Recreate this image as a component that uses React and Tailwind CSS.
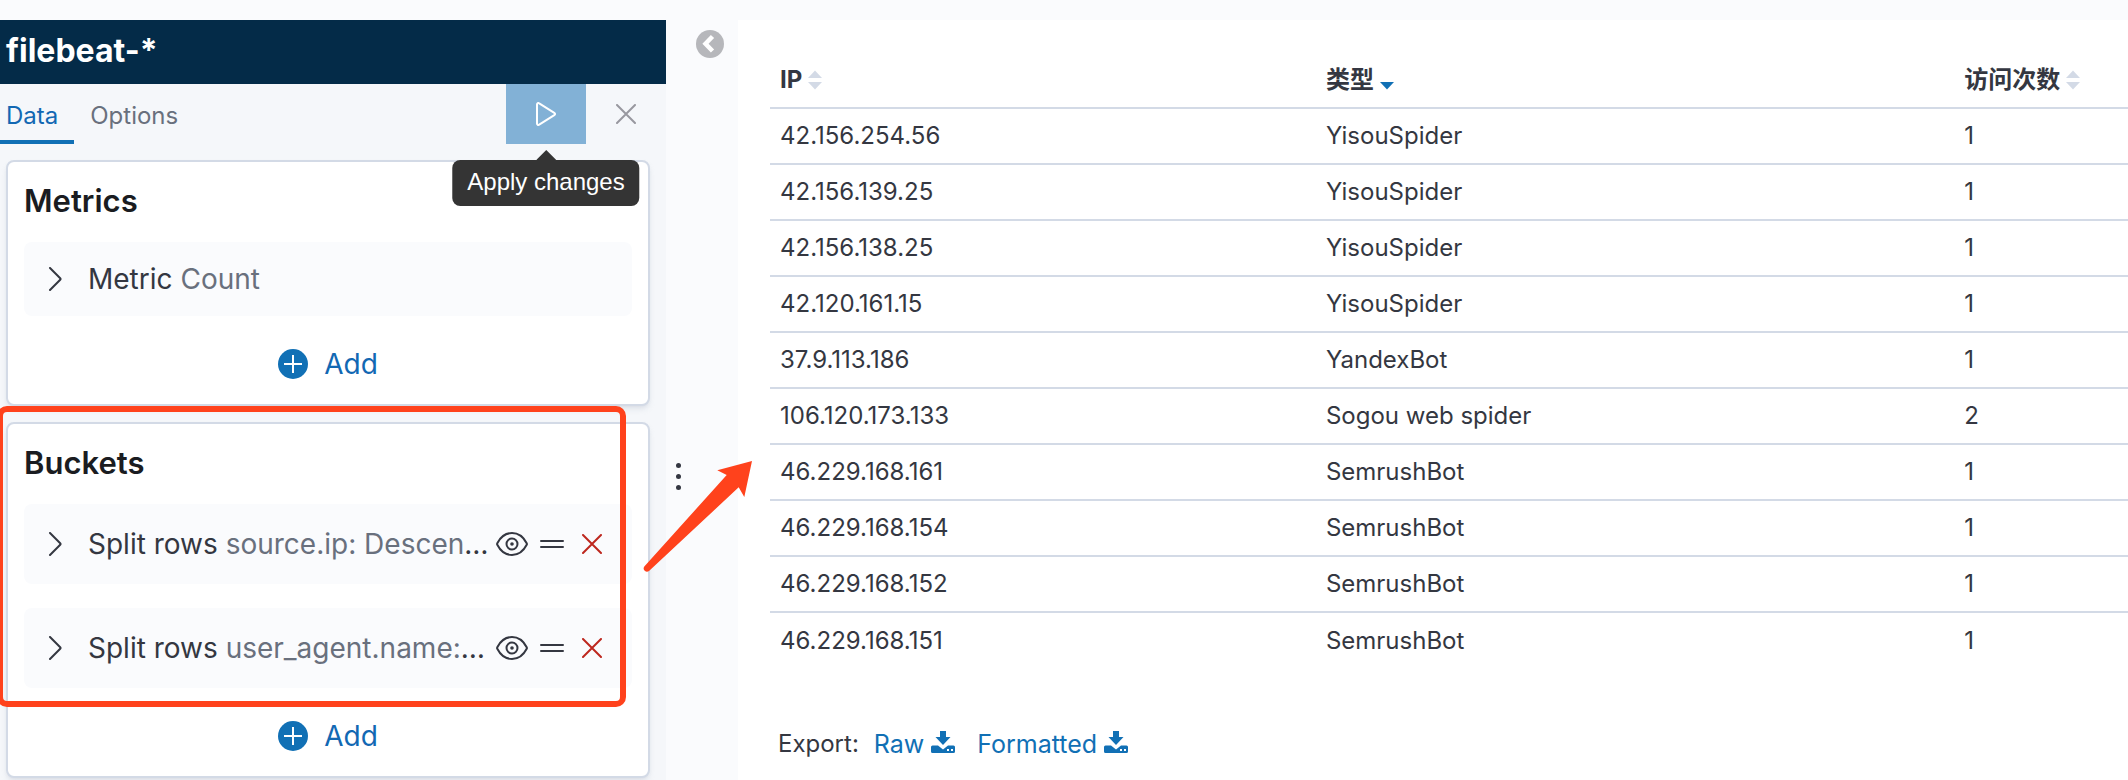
import React, { useState } from "react";

const rows = [
  ["42.156.254.56", "YisouSpider", 1],
  ["42.156.139.25", "YisouSpider", 1],
  ["42.156.138.25", "YisouSpider", 1],
  ["42.120.161.15", "YisouSpider", 1],
  ["37.9.113.186", "YandexBot", 1],
  ["106.120.173.133", "Sogou web spider", 2],
  ["46.229.168.161", "SemrushBot", 1],
  ["46.229.168.154", "SemrushBot", 1],
  ["46.229.168.152", "SemrushBot", 1],
  ["46.229.168.151", "SemrushBot", 1],
];

const CrossIcon = () => (
  <svg width="20" height="20" viewBox="0 0 20 20" fill="none" stroke="currentColor" strokeWidth="2" strokeLinecap="round">
    <path d="M1 1l18 18M19 1L1 19" />
  </svg>
);

const ChevronIcon = () => (
  <svg width="14" height="24" viewBox="0 0 14 24" fill="none" stroke="currentColor" strokeWidth="2" strokeLinecap="round" strokeLinejoin="round">
    <path d="M2 1l10.2 10.2a1.2 1.2 0 0 1 0 1.6L2 23" />
  </svg>
);

const EyeIcon = () => (
  <svg width="32" height="24" viewBox="0 0 32 24" fill="none" stroke="currentColor" strokeWidth="2">
    <path d="M1.3 11.2C4.6 4.8 9.8 1 16 1s11.400 3.800 14.700 10.200a1.700 1.700 0 0 1 0 1.600C27.400 19.200 22.200 23 16 23S4.600 19.200 1.300 12.800a1.700 1.700 0 0 1 0-1.600z" />
    <circle cx="16" cy="12" r="5.500" />
    <circle cx="16" cy="12" r="1.800" fill="currentColor" stroke="none" />
  </svg>
);

const GrabIcon = () => (
  <svg width="24" height="10" viewBox="0 0 24 10" fill="none" stroke="currentColor" strokeWidth="2" strokeLinecap="round">
    <path d="M1 2h22M1 8h22" />
  </svg>
);

const PlusIcon = () => (
  <svg width="30" height="30" viewBox="0 0 30 30">
    <circle cx="15" cy="15" r="15" fill="#1170b5" />
    <path d="M15 6v18M6 15h18" stroke="#fff" strokeWidth="2" />
  </svg>
);

const DownloadIcon = () => (
  <svg className="mb-1" width="24" height="22" viewBox="0 0 24 22" fill="currentColor">
    <path d="M9 0h6v6h4.500L12 14 4.500 6H9z" />
    <path
      fillRule="evenodd"
      d="M1.500 14.500h5.500L12 18.500l5-4h5.500A1.500 1.500 0 0 1 24 16v4.500a1.500 1.500 0 0 1-1.500 1.500h-21A1.500 1.500 0 0 1 0 20.500V16a1.500 1.500 0 0 1 1.500-1.500zM16 18h2v2h-2zM20 18h2v2h-2z"
    />
  </svg>
);

const SortIcon = ({ sorted }) => (
  <svg width="14" height="20" viewBox="0 0 14 20" fill={sorted ? "#1170b5" : "#d3dae6"}>
    {!sorted && <path d="M7 0.500L14 8H0z" />}
    <path d="M0 12h14l-7 7.500z" />
  </svg>
);

const AddButton = () => (
  <button className="mx-auto mt-6 flex h-12 items-center gap-4 text-[28px] leading-10 text-[#1268b3]">
    <PlusIcon />
    Add
  </button>
);

const AggRow = ({ name, detail, editable }) => (
  <div className={`flex items-center rounded-lg bg-[#fafbfd] pr-[30px] pl-6 ${editable ? "h-20" : "h-[74px]"}`}>
    <button className="flex min-w-0 flex-1 items-center gap-[26px] text-left" aria-expanded="false">
      <span className="shrink-0">
        <ChevronIcon />
      </span>
      <span className="min-w-0 flex-1 truncate text-[28px] leading-10">
        {name} <span className="text-[#69707d]">{detail}</span>
      </span>
    </button>
    {editable && (
      <div className="ml-1 flex items-center">
        <button aria-label="Disable aggregation">
          <EyeIcon />
        </button>
        <button className="ml-3" aria-label="Change order">
          <GrabIcon />
        </button>
        <button className="ml-[18px] text-[#bd271e]" aria-label="Remove aggregation">
          <CrossIcon />
        </button>
      </div>
    )}
  </div>
);

const Panel = ({ title, children }) => (
  <section className="rounded-lg border-2 border-[#d3dae6] bg-white p-4 shadow-md shadow-[#98a2b3]/20">
    <h2 className="mb-[18px] text-[31px] leading-[46px] font-semibold text-[#1a1c21]">{title}</h2>
    <div className="flex flex-col gap-6">{children}</div>
    <AddButton />
  </section>
);

const Sidebar = () => {
  const [tab, setTab] = useState("Data");

  return (
    <aside className="relative w-[666px] shrink-0 bg-[#f5f7fa]">
      <h1 className="flex h-16 items-center bg-[#042b48] px-1.5 pb-0.5 text-[32px] font-bold text-white">filebeat-*</h1>
      <div className="flex h-[60px]">
        {["Data", "Options"].map((name) => (
          <button
            key={name}
            onClick={() => setTab(name)}
            className={`border-b-4 pt-2 text-2xl ${name === "Data" ? "pr-4 pl-1.5" : "px-4"} ${
              tab === name ? "border-[#1170b5] text-[#1268b3]" : "border-transparent text-[#69707d]"
            }`}>
            {name}
          </button>
        ))}
        <div className="relative ml-auto">
          <button className="flex h-full w-20 items-center justify-center bg-[#82b1d6] text-white" aria-label="Apply changes">
            <svg width="20" height="24" viewBox="0 0 20 24" fill="none" stroke="currentColor" strokeWidth="2" strokeLinejoin="round">
              <path d="M1 2.500v19c0 1.200 1.200 1.900 2.200 1.200L18.300 13.200c1-.6 1-1.800 0-2.400L3.200 1.300C2.200.6 1 1.300 1 2.500z" />
            </svg>
          </button>
          {/* tooltip */}
          <div className="absolute top-[66px] left-1/2 z-10 flex -translate-x-1/2 flex-col items-center">
            <svg width="20" height="10" viewBox="0 0 20 10" fill="#343434">
              <path d="M10 0l10 10H0z" />
            </svg>
            <div
              role="tooltip"
              className="rounded-lg bg-[#343434] px-[15px] pt-1 pb-1.5 font-['Liberation_Sans',sans-serif] text-2xl leading-9 font-medium whitespace-nowrap text-white">
              Apply changes
            </div>
          </div>
        </div>
        <button className="flex w-20 items-center justify-center text-[#98989f]" aria-label="Discard changes">
          <CrossIcon />
        </button>
      </div>
      <div className="flex flex-col gap-4 pt-4 pr-4 pl-1.5">
        <Panel title="Metrics">
          <AggRow name="Metric" detail="Count" />
        </Panel>
        <Panel title="Buckets">
          <AggRow name="Split rows" detail="source.ip: Descending" editable />
          <AggRow name="Split rows" detail="user_agent.name: Descending" editable />
        </Panel>
      </div>
      {/* highlight around the buckets and the arrow to the table */}
      <div className="pointer-events-none absolute top-[386px] -left-[3px] h-[301px] w-[629px] rounded-[10px] border-[6px] border-[#ff421c]" />
      <svg className="pointer-events-none absolute top-[440px] left-[640px] z-10" width="114" height="136" viewBox="0 0 114 136" fill="#ff421c">
        <path d="M112 1L77.300 10.300 86.700 15 4.300 106.500a3.300 3.300 0 0 0 4.700 4.500L98.700 27.300 104.300 37z" />
      </svg>
    </aside>
  );
};

const ResultTable = () => (
  <table className="w-full table-fixed text-left text-2xl">
    <colgroup>
      <col className="w-[40.2%]" />
      <col className="w-[47%]" />
      <col />
    </colgroup>
    <thead>
      <tr className="h-[58px] border-b-2 border-[#d3dae6]">
        {["IP", "类型", "访问次数"].map((title) => (
          <th key={title} className="pt-0.5 pl-2.5 font-bold whitespace-nowrap">
            <button className="flex items-center gap-1.5">
              {title}
              <SortIcon sorted={title === "类型"} />
            </button>
          </th>
        ))}
      </tr>
    </thead>
    <tbody>
      {rows.map(([ip, type, count]) => (
        <tr key={ip} className="h-14 border-b-2 border-[#d3dae6] last:border-b-0">
          <td className="pl-2.5">{ip}</td>
          <td className="pl-2.5">{type}</td>
          <td className="pl-2.5">{count}</td>
        </tr>
      ))}
    </tbody>
  </table>
);

const App = () => {
  return (
    <div className="flex min-h-screen overflow-hidden bg-[#fafbfd] pt-5 font-['Inter','Noto_Sans_CJK_SC',sans-serif] text-[#343741]">
      <Sidebar />
      <div className="flex w-[72px] shrink-0 justify-between pr-3.5 pl-2">
        <button className="flex w-2 flex-col items-center gap-1.5 self-start pt-[443px]" aria-label="Resize editor">
          <span className="h-[5px] w-[5px] rounded-full bg-[#343741]" />
          <span className="h-[5px] w-[5px] rounded-full bg-[#343741]" />
          <span className="h-[5px] w-[5px] rounded-full bg-[#343741]" />
        </button>
        <button className="mt-2.5 self-start" aria-label="Toggle editor">
          <svg width="28" height="28" viewBox="0 0 28 28">
            <circle cx="14" cy="14" r="14" fill="#b6b7bb" />
            <path d="M16.500 6.500L9.500 13.700l7 7.300" fill="none" stroke="#fff" strokeWidth="4.500" />
          </svg>
        </button>
      </div>
      <main className="min-w-0 flex-1 bg-white pt-[30px] pl-8">
        <ResultTable />
        <div className="mt-[58px] flex items-center pl-2 text-2xl leading-9">
          <span>Export:</span>
          <a href="#raw" className="ml-[15px] flex items-center gap-[7px] text-[25px] text-[#1170b5]">
            Raw <DownloadIcon />
          </a>
          <a href="#formatted" className="ml-[22px] flex items-center gap-[7px] text-[25px] text-[#1170b5]">
            Formatted <DownloadIcon />
          </a>
        </div>
      </main>
    </div>
  );
};

export default App;
